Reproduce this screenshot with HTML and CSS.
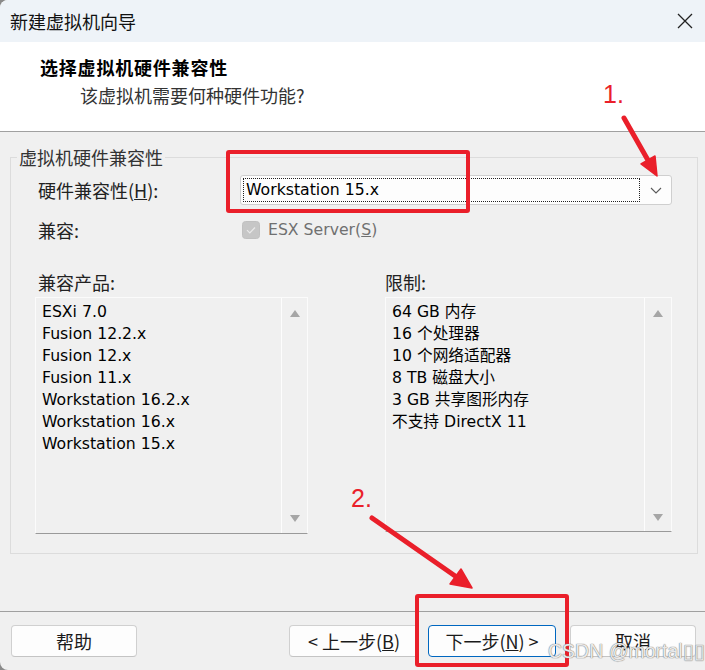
FILE: index.html
```html
<!DOCTYPE html>
<html lang="zh-CN">
<head>
<meta charset="utf-8">
<title>新建虚拟机向导</title>
<link rel="stylesheet" href="styles.css">
</head>
<body>
<div class="window">
  <div class="titlebar">
    <span class="title">新建虚拟机向导</span>
    <svg class="close" width="18" height="18" viewBox="0 0 18 18"><path d="M2 2L16 16M16 2L2 16"/></svg>
  </div>
  <div class="header">
    <div class="h-title">选择虚拟机硬件兼容性</div>
    <div class="h-sub">该虚拟机需要何种硬件功能?</div>
  </div>
  <div class="content">
    <fieldset class="group">
      <legend class="legend">虚拟机硬件兼容性</legend>
      <div class="row row-hw">
        <span class="lbl">硬件兼容性(<u>H</u>):</span>
        <div class="combo">
          <div class="combo-field">Workstation 15.x</div>
          <div class="combo-btn">
            <svg width="12" height="7" viewBox="0 0 12 7"><path d="M1 1L6 6L11 1"/></svg>
          </div>
        </div>
      </div>
      <div class="row row-compat">
        <span class="lbl">兼容:</span>
        <span class="check">
          <svg width="18" height="18" viewBox="0 0 18 18"><rect x="0.5" y="0.5" width="17" height="17" rx="3"/><path d="M5 9.2L7.8 12L13 6.5"/></svg>
        </span>
        <span class="check-text">ESX Server(<u>S</u>)</span>
      </div>
      <div class="lists">
        <div class="col">
          <div class="col-label col-label-first">兼容产品:</div>
          <div class="listbox">
            <ul class="items">
              <li>ESXi 7.0</li>
              <li>Fusion 12.2.x</li>
              <li>Fusion 12.x</li>
              <li>Fusion 11.x</li>
              <li>Workstation 16.2.x</li>
              <li>Workstation 16.x</li>
              <li>Workstation 15.x</li>
            </ul>
            <div class="scroll"><span class="arrow arrow-up"></span><span class="arrow arrow-down"></span></div>
          </div>
        </div>
        <div class="col">
          <div class="col-label">限制:</div>
          <div class="listbox listbox-right">
            <ul class="items">
              <li>64 GB 内存</li>
              <li>16 个处理器</li>
              <li>10 个网络适配器</li>
              <li>8 TB 磁盘大小</li>
              <li>3 GB 共享图形内存</li>
              <li>不支持 DirectX 11</li>
            </ul>
            <div class="scroll"><span class="arrow arrow-up"></span><span class="arrow arrow-down"></span></div>
          </div>
        </div>
      </div>
    </fieldset>
  </div>
  <div class="footer">
    <button class="btn btn-help">帮助</button>
    <button class="btn btn-back">&lt; 上一步(<u>B</u>)</button>
    <button class="btn btn-next">下一步(<u>N</u>) &gt;</button>
    <button class="btn btn-cancel">取消</button>
  </div>

  <div class="mark mark-rect1"></div>
  <div class="mark mark-rect2"></div>
  <div class="mark-num num1">1.</div>
  <div class="mark-num num2">2.</div>
  <svg class="arrows" width="705" height="670" viewBox="0 0 705 670">
    <line x1="624" y1="118" x2="649" y2="162"/>
    <polygon points="657,176 641,164 655,156"/>
    <line x1="372" y1="518" x2="458" y2="578"/>
    <polygon points="472,588 450,584 461,569"/>
  </svg>
  <div class="watermark">CSDN @mortal▯▯▯</div>
</div>
</body>
</html>
```

FILE: styles.css
```css
* { box-sizing: border-box; }

html, body {
  margin: 0;
  padding: 0;
  background: #8a8a8a;
}

body {
  width: 705px;
  height: 670px;
  overflow: hidden;
  font-family: "Noto Sans CJK SC", "DejaVu Sans", sans-serif;
  color: #1a1a1a;
}

.window {
  position: relative;
  width: 705px;
  height: 670px;
  display: flex;
  flex-direction: column;
  background: #f0f0f0;
  border-top-left-radius: 8px;
  border-bottom-left-radius: 8px;
  overflow: hidden;
}

/* title bar */
.titlebar {
  height: 42px;
  flex: none;
  display: flex;
  align-items: center;
  justify-content: space-between;
  padding: 0 11px 0 10px;
  background: #eef3f8;
}

.title {
  font-size: 18px;
  line-height: 24px;
  color: #111;
}

.close path {
  stroke: #222;
  stroke-width: 1.3;
  fill: none;
}

/* header */
.header {
  height: 90px;
  flex: none;
  background: #ffffff;
  border-bottom: 1px solid #a0a0a0;
  padding: 13px 0 0 40px;
}

.h-title {
  font-size: 18px;
  line-height: 24px;
  font-weight: bold;
  letter-spacing: 0.8px;
  color: #000;
}

.h-sub {
  margin: 4px 0 0 40px;
  font-size: 18px;
  line-height: 24px;
  color: #333;
}

/* content */
.content {
  height: 480px;
  flex: none;
  border-bottom: 1px solid #a0a0a0;
  padding: 13px 8px 0 10px;
}

.group {
  margin: 0;
  padding: 0 0 19px 0;
  width: 688px;
  border: 1px solid #dcdcdc;
  min-width: 0;
}

.legend {
  margin-left: 6px;
  padding: 0 2px;
  font-size: 18px;
  line-height: 24px;
  color: #333;
}

.row {
  display: flex;
  align-items: center;
  padding-left: 27px;
}

.lbl {
  width: 202px;
  flex: none;
  font-size: 18px;
  line-height: 24px;
  color: #222;
}

.row-hw {
  margin-top: 6px;
  height: 30px;
}

.combo {
  width: 432px;
  height: 30px;
  display: flex;
  background: #fdfdfd;
  border: 1px solid #cfcfcf;
  border-radius: 3px;
}

.combo-field {
  flex: 1;
  margin: 2px 0 2px 2px;
  border: 1px dotted #222;
  padding-left: 2px;
  font-family: "DejaVu Sans", "Noto Sans CJK SC", sans-serif;
  font-size: 15.7px;
  line-height: 22px;
  color: #000;
}

.combo-btn {
  width: 31px;
  flex: none;
  display: flex;
  align-items: center;
  justify-content: center;
}

.combo-btn path {
  stroke: #5a5a5a;
  stroke-width: 1.1;
  fill: none;
}

.row-compat {
  margin-top: 15px;
  height: 20px;
}

.check {
  margin-left: 2px;
  width: 18px;
  height: 18px;
  display: flex;
}

.check rect {
  fill: #c6c6c6;
  stroke: #c0c0c0;
}

.check path {
  stroke: #e9e9e9;
  stroke-width: 1.2;
  fill: none;
}

.check-text {
  margin-left: 8px;
  font-family: "DejaVu Sans", "Noto Sans CJK SC", sans-serif;
  font-size: 15.7px;
  line-height: 20px;
  color: #707070;
}

/* lists */
.lists {
  margin-top: 30px;
  padding-left: 24px;
  display: grid;
  grid-template-columns: 273px 287px;
  column-gap: 77px;
}

.col-label {
  font-size: 18px;
  line-height: 24px;
  color: #222;
}

.col-label-first {
  margin-left: 3px;
}

.listbox {
  margin-top: 3px;
  height: 237px;
  display: flex;
  border: 1px solid #fbfbfb;
  border-bottom-color: #9a9a9a;
}

.listbox-right {
  height: 235px;
}

.items {
  flex: 1;
  list-style: none;
  margin: 0;
  padding: 3px 0 0 6px;
  font-family: "DejaVu Sans", "Noto Sans CJK SC", sans-serif;
  font-size: 15.7px;
  line-height: 22px;
  color: #000;
}

.scroll {
  width: 26px;
  flex: none;
  border-left: 1px solid #fdfdfd;
  display: flex;
  flex-direction: column;
  align-items: center;
  justify-content: space-between;
  padding: 12px 0 11px 0;
}

.listbox-right .scroll {
  width: 27px;
  padding-bottom: 10px;
}

.arrow {
  width: 0;
  height: 0;
  border-left: 5.5px solid transparent;
  border-right: 5.5px solid transparent;
}

.arrow-up {
  border-bottom: 7px solid #a6a6a6;
}

.arrow-down {
  border-top: 7px solid #a6a6a6;
}

/* footer */
.footer {
  flex: 1;
  display: flex;
  align-items: flex-start;
  padding: 13px 0 0 11px;
}

.btn {
  height: 32px;
  margin: 0;
  padding: 0;
  background: #fdfdfd;
  border: 1px solid #d0d0d0;
  border-bottom-color: #c4c4c4;
  border-radius: 4px;
  font-family: "Noto Sans CJK SC", "DejaVu Sans", sans-serif;
  font-size: 18px;
  line-height: 24px;
  color: #1a1a1a;
}

.btn-help { width: 126px; }
.btn-back { width: 130px; margin-left: 152px; }
.btn-next { width: 128px; margin-left: 9px; border-color: #0067c0; }
.btn-cancel { width: 126px; margin-left: 14px; }

/* annotations */
.mark {
  position: absolute;
  border: 4px solid #ea1f2a;
  border-radius: 3px;
}

.mark-rect1 {
  left: 226px;
  top: 150px;
  width: 244px;
  height: 63px;
}

.mark-rect2 {
  left: 415px;
  top: 594px;
  width: 154px;
  height: 73px;
}

.mark-num {
  position: absolute;
  font-family: "Liberation Sans", sans-serif;
  font-size: 25px;
  line-height: 25px;
  color: #ea1f2a;
}

.num1 { left: 603px; top: 82px; }
.num2 { left: 351px; top: 486px; }

.arrows {
  position: absolute;
  left: 0;
  top: 0;
  pointer-events: none;
}

.arrows line {
  stroke: #ea1f2a;
  stroke-width: 5;
  stroke-linecap: round;
}

.arrows polygon {
  fill: #ea1f2a;
  stroke: #ea1f2a;
  stroke-width: 1.5;
  stroke-linejoin: round;
}

.watermark {
  position: absolute;
  left: 548px;
  top: 639px;
  font-family: "Liberation Sans", sans-serif;
  font-size: 19.5px;
  line-height: 24px;
  white-space: nowrap;
  color: rgba(255, 255, 255, 0.85);
  text-shadow: 0 0 1px #777, 0 0 1px #777;
}
```
